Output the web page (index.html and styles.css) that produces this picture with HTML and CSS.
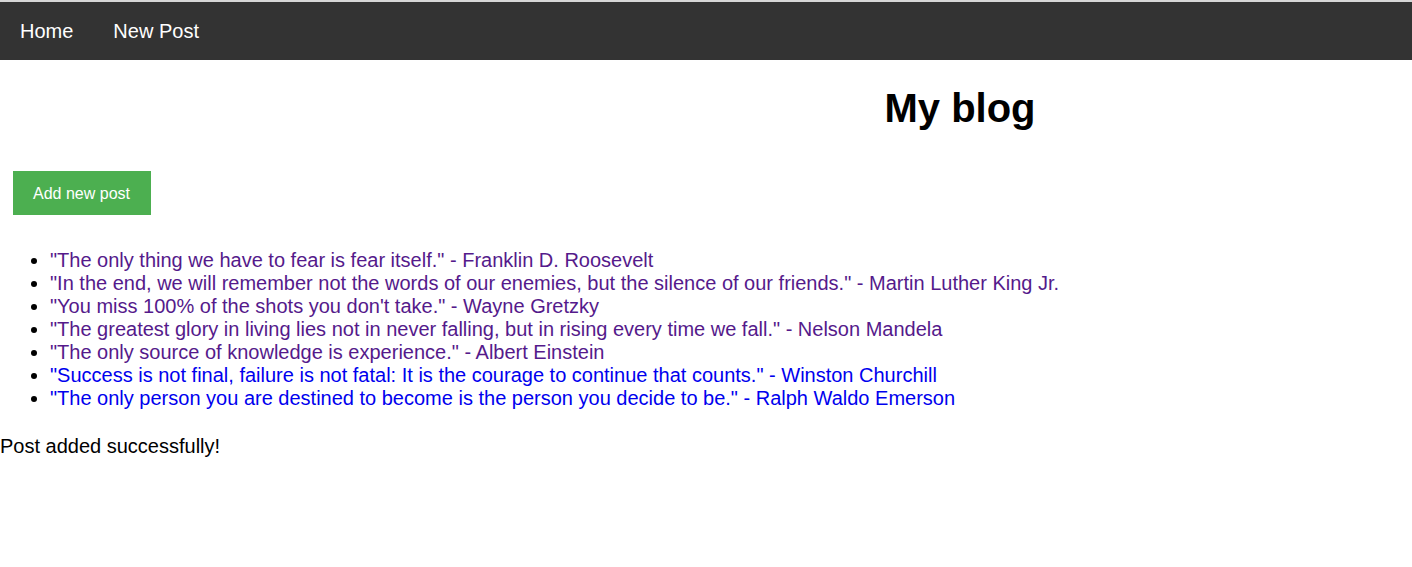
FILE: index.html
```html
<!DOCTYPE html>
<html>
<head>
<meta charset="utf-8">
<link rel="stylesheet" href="styles.css">
</head>
<body>
<nav class="topnav">
  <a href="#">Home</a>
  <a href="#">New Post</a>
</nav>
<h1 class="title">My blog</h1>
<div class="actions"><button class="add-btn">Add new post</button></div>
<ul class="posts">
  <li><a class="visited" href="#">"The only thing we have to fear is fear itself." - Franklin D. Roosevelt</a></li>
  <li><a class="visited" href="#">"In the end, we will remember not the words of our enemies, but the silence of our friends." - Martin Luther King Jr.</a></li>
  <li><a class="visited" href="#">"You miss 100% of the shots you don't take." - Wayne Gretzky</a></li>
  <li><a class="visited" href="#">"The greatest glory in living lies not in never falling, but in rising every time we fall." - Nelson Mandela</a></li>
  <li><a class="visited" href="#">"The only source of knowledge is experience." - Albert Einstein</a></li>
  <li><a class="fresh" href="#">"Success is not final, failure is not fatal: It is the courage to continue that counts." - Winston Churchill</a></li>
  <li><a class="fresh" href="#">"The only person you are destined to become is the person you decide to be." - Ralph Waldo Emerson</a></li>
</ul>
<p class="message">Post added successfully!</p>
</body>
</html>
```
FILE: styles.css
```css
html, body {
  margin: 0;
  padding: 0;
  background: #fff;
}
body {
  font-family: "Liberation Sans", Arial, sans-serif;
  font-size: 20px;
  line-height: 23px;
  color: #000;
  border-top: 2px solid #d6d6d6;
}
.topnav {
  display: flex;
  background: #333;
  height: 58px;
  align-items: center;
}
.topnav a {
  color: #fff;
  text-decoration: none;
  font-size: 20px;
  padding: 0 20px;
}
.title {
  margin: 25px 0 0;
  padding-left: 508px;
  text-align: center;
  font-size: 40px;
  line-height: 46px;
  font-weight: bold;
}
.actions {
  display: flex;
  margin-top: 40px;
  padding-left: 13px;
}
.add-btn {
  display: flex;
  align-items: center;
  height: 44px;
  box-sizing: border-box;
  background: #4caf50;
  color: #fff;
  border: none;
  font-family: "Liberation Sans", Arial, sans-serif;
  font-size: 16px;
  line-height: 18px;
  padding: 1px 20px 0 19px;
  width: 138px;
  justify-content: center;
  cursor: pointer;
}
.posts {
  margin: 34px 0 0;
  padding-left: 50px;
}
.posts a {
  text-decoration: none;
}
.posts a.visited {
  color: #551a8b;
}
.posts a.fresh {
  color: #0000ee;
}
.message {
  margin: 25px 0 0;
}
```
